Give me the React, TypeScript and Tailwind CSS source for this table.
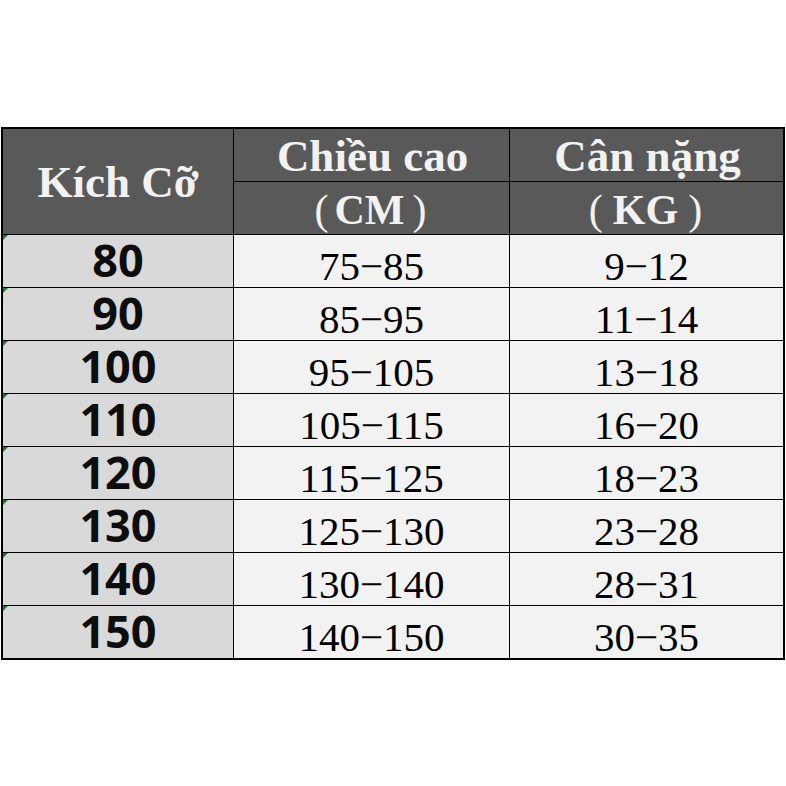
import React from "react";

const rows: [string, string, string][] = [
  ["80", "75−85", "9−12"],
  ["90", "85−95", "11−14"],
  ["100", "95−105", "13−18"],
  ["110", "105−115", "16−20"],
  ["120", "115−125", "18−23"],
  ["130", "125−130", "23−28"],
  ["140", "130−140", "28−31"],
  ["150", "140−150", "30−35"],
];

const serif = { fontFamily: '"Liberation Serif", "Noto Sans CJK SC", serif' };

export default function App() {
  return (
    <div className="w-[786px] h-[786px] bg-white pt-[127px] pl-[1px]">
      <div className="w-[784px] border-2 border-black bg-black grid grid-cols-[230px_275px_273px] auto-rows-[52px] gap-[1px]">
        <div
          className="row-span-2 bg-[#595959] flex items-center justify-center text-[#f2f2f2] font-bold text-[45px] leading-none"
          style={serif}
        >
          <span className="mt-[2px]">Kích Cỡ</span>
        </div>
        <div
          className="bg-[#595959] flex items-center justify-center text-[#f2f2f2] font-bold text-[45px] leading-none"
          style={serif}
        >
          <span className="pt-[2px] pl-[2px]">Chiều cao</span>
        </div>
        <div
          className="bg-[#595959] flex items-center justify-center text-[#f2f2f2] font-bold text-[45px] leading-none"
          style={serif}
        >
          <span className="pt-[2px] pl-[2px]">Cân nặng</span>
        </div>
        <div
          className="bg-[#595959] flex items-center justify-center text-[#f2f2f2] font-bold text-[42px] leading-none"
          style={serif}
        >
          <span className="mt-[4px] ml-[-2px]">
            <span className="font-normal mr-[6px]">(</span>CM<span className="font-normal ml-[8px]">)</span>
          </span>
        </div>
        <div
          className="bg-[#595959] flex items-center justify-center text-[#f2f2f2] font-bold text-[42px] leading-none"
          style={serif}
        >
          <span className="mt-[4px] ml-[-2px]">
            <span className="font-normal mr-[10px]">(</span>KG<span className="font-normal ml-[10px]">)</span>
          </span>
        </div>
        {rows.map(([size, h, w]) => (
          <React.Fragment key={size}>
            <div className="relative bg-[#d9d9d9] flex items-center justify-center">
              <div className="absolute left-0 top-0 w-0 h-0 border-t-[5px] border-r-[5px] border-t-[#1e7b34] border-r-transparent" />
              <span
                className="font-bold text-[45px] leading-none text-[#0d0d0d] mt-[-3px]"
                style={{ fontFamily: '"Noto Sans", "Open Sans", sans-serif' }}
              >
                {size}
              </span>
            </div>
            <div className="bg-[#f2f2f2] flex items-center justify-center">
              <span className="text-[41px] leading-none text-black mt-[10px]" style={serif}>
                {h}
              </span>
            </div>
            <div className="bg-[#f2f2f2] flex items-center justify-center">
              <span className="text-[41px] leading-none text-black mt-[10px]" style={serif}>
                {w}
              </span>
            </div>
          </React.Fragment>
        ))}
      </div>
    </div>
  );
}
